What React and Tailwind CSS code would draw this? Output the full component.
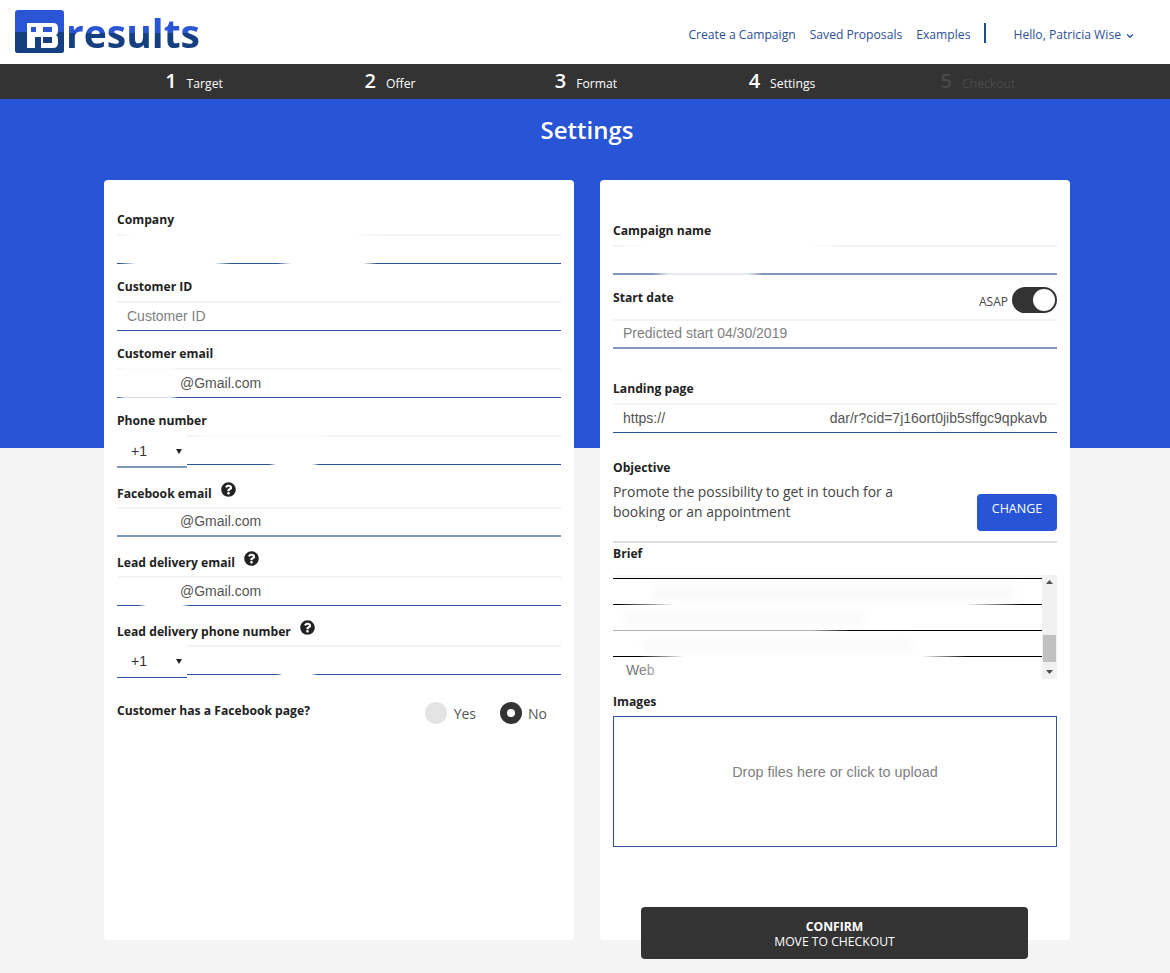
import { ChevronDown } from "lucide-react";
import { FaQuestionCircle } from "react-icons/fa";

const sans = "font-['Open_Sans',sans-serif]";
const arial = "font-['Liberation_Sans',Arial,sans-serif]";

const steps = [
  { n: 1, label: "Target" },
  { n: 2, label: "Offer" },
  { n: 3, label: "Format" },
  { n: 4, label: "Settings" },
  { n: 5, label: "Checkout", off: true },
];

function Logo() {
  return (
    <div className="flex ml-[15px] mt-[6px]">
      <svg width="49" height="44" viewBox="0 0 49 44" className="mt-[4px]">
        <rect width="49" height="43" rx="3" fill="#2a56d6" />
        <path d="M0 22h49v18a3 3 0 0 1-3 3H3a3 3 0 0 1-3-3z" fill="#163f80" />
        <path
          fill="#fff"
          fillRule="evenodd"
          d="M12 13H38Q43 13 43 18V21Q43 24 41 25Q43 26 43 29V33Q43 38 38 38H26V27H20V38H12ZM16 17V22H21V17ZM28 17V22H37V17ZM28 27V33H37V27Z"
        />
      </svg>
      <span
        className={`${sans} block h-[53px] ml-[2px] font-bold text-[39px] leading-[53px] bg-[linear-gradient(180deg,#2a56d6_27px,#163f80_27px)] bg-clip-text text-transparent`}
      >
        results
      </span>
    </div>
  );
}

function Header() {
  return (
    <header className="h-16 bg-white flex justify-between">
      <Logo />
      <nav className={`${sans} flex items-center text-[12.15px] text-[#2d4f94] h-[70px] pr-[35px]`}>
        <a className="mr-[14px]">Create a Campaign</a>
        <a className="mr-[14px]">Saved Proposals</a>
        <a>Examples</a>
        <span className="w-[2px] h-[20px] bg-[#1f4e8c] ml-[14px] mr-[27px] -mt-[4px]" />
        <a>Hello, Patricia Wise</a>
        <ChevronDown size={10} strokeWidth={3} className="ml-[4px] mt-[1px]" />
      </nav>
    </header>
  );
}

function Steps() {
  return (
    <div className="h-[35px] bg-[#333333]">
      <div className={`${sans} ml-[96px] w-[980px] grid grid-cols-5`}>
        {steps.map((s) => (
          <div
            key={s.n}
            className={`flex justify-center items-baseline h-[35px] ${s.off ? "text-[#4a4a4a]" : "text-white"}`}
          >
            <span className="text-[20px] font-semibold leading-[33px]">{s.n}</span>
            <span className="text-[12.2px] ml-[10px]">{s.label}</span>
          </div>
        ))}
      </div>
    </div>
  );
}

function Smear({ className }) {
  return (
    <div
      className={`absolute bg-[linear-gradient(90deg,transparent,#fff_14%,#fff_86%,transparent)] ${className}`}
    />
  );
}

function Help() {
  return <FaQuestionCircle size={15} className="text-[#222] ml-[9px] -mt-[10px]" />;
}

function Label({ children, right, className = "h-[18px] mb-[6px]" }) {
  return (
    <div className={`flex items-center justify-between ${className}`}>
      <div className={`${sans} flex items-center mt-[2px] text-[12.15px] font-bold text-[#222] leading-[18px]`}>
        {children}
      </div>
      {right}
    </div>
  );
}

function Input({ children, className = "", smears, soft }) {
  return (
    <div
      className={`${arial} relative flex-1 h-[30px] flex items-center border-t-2 border-t-[#f3f3f3] border-b text-[14px] text-[#555] pl-[10px] pb-[1px] ${
        soft ? "border-b-2 border-b-[#7f97bd]" : "border-b-[#2f5597]"
      } ${className}`}
    >
      {children}
      {smears}
    </div>
  );
}

function PhoneInput({ smears, soft }) {
  return (
    <div className="flex items-start mb-[15px]">
      <div
        className={`${arial} w-[70px] h-[33px] flex items-center justify-between pl-[14px] pr-[5px] text-[14px] text-[#333] ${
          soft ? "border-b-2 border-b-[#7f97bd] pt-[1px]" : "border-b border-b-[#2f5597]"
        }`}
      >
        +1
        <svg width="6" height="5" viewBox="0 0 6 5">
          <path d="M0 0h6L3 5z" fill="#222" />
        </svg>
      </div>
      <Input smears={smears} />
    </div>
  );
}

function Radio({ label, checked }) {
  return (
    <label className="flex items-center">
      <span
        className={`w-[22px] h-[22px] rounded-full flex items-center justify-center ${
          checked ? "bg-[#333]" : "bg-[#e4e4e4]"
        }`}
      >
        {checked && <span className="w-[8px] h-[8px] rounded-full bg-white" />}
      </span>
      <span className={`${sans} text-[14px] text-[#555] ${checked ? "ml-[6px]" : "ml-[7px]"}`}>{label}</span>
    </label>
  );
}

function LeftCard() {
  return (
    <div className="bg-white rounded-[4px] h-[760px] pt-[30px] px-[13px]">
      <Label>Company</Label>
      <Input
        className="mb-[13px]"
        smears={
          <>
            <Smear className="left-[3px] w-[110px] -top-[2px] bottom-[-2px]" />
            <Smear className="left-[160px] w-[100px] top-[2px] bottom-[-2px]" />
            <Smear className="left-0 w-[270px] -top-[2px] h-[4px] bg-[linear-gradient(90deg,#fff,#fff_30%,transparent_100%)]" />
          </>
        }
      />
      <Label>Customer ID</Label>
      <Input className="mb-[13px]">
        <span className="text-[#808080]">Customer ID</span>
      </Input>
      <Label>Customer email</Label>
      <Input
        className="mb-[13px] pl-[63px]"
        smears={<Smear className="left-0 w-[62px] -top-[2px] bottom-[-2px] opacity-80" />}
      >
        @Gmail.com
      </Input>
      <Label>Phone number</Label>
      <PhoneInput
        soft
        smears={
          <>
            <Smear className="left-[82px] w-[50px] top-[10px] bottom-[-2px]" />
            <Smear className="left-0 w-[150px] -top-[2px] h-[4px] opacity-80" />
          </>
        }
      />
      <Label className="h-[20px] mb-[4px]">
        Facebook email <Help />
      </Label>
      <Input className="mb-[15px] pl-[63px]" soft>
        @Gmail.com
      </Input>
      <Label className="h-[20px] mb-[4px]">
        Lead delivery email <Help />
      </Label>
      <Input className="mb-[15px] pl-[63px]">
        @Gmail.com
        <Smear className="left-[22px] w-[50px] top-[20px] bottom-[-2px]" />
      </Input>
      <Label className="h-[20px] mb-[4px]">
        Lead delivery phone number <Help />
      </Label>
      <PhoneInput smears={<Smear className="left-[90px] w-[40px] top-[20px] bottom-[-2px]" />} />
      <div className="flex justify-between items-start mt-[24px] pr-[14px]">
        <div className={`${sans} text-[12.15px] font-bold text-[#222] leading-[18px]`}>
          Customer has a Facebook page?
        </div>
        <div className="flex gap-[24px]">
          <Radio label="Yes" />
          <Radio label="No" checked />
        </div>
      </div>
    </div>
  );
}

function BriefBox() {
  return (
    <div className="flex h-[104px] bg-[#f7f7f7] mb-[13px]">
      <div className="flex-1 pt-[3px] overflow-hidden">
        <div className="relative h-[26px] bg-white border-t border-black">
          <div className="absolute left-[40px] w-[360px] top-[8px] h-[12px] bg-[#f8f8f8] blur-[4px]" />
        </div>
        <div className="relative h-[26px] bg-white border-t border-black">
          <Smear className="left-[5px] w-[405px] -top-[2px] h-[4px]" />
          <div className="absolute left-[10px] w-[240px] top-[8px] h-[12px] bg-[#f9f9f9] blur-[4px]" />
        </div>
        <div className="relative h-[26px] bg-white border-t border-black">
          <Smear className="-left-[60px] w-[300px] -top-[1px] h-[3px] opacity-70" />
          <div className="absolute left-[30px] w-[270px] top-[8px] h-[12px] bg-[#f9f9f9] blur-[4px]" />
        </div>
        <div className={`${arial} relative h-[26px] bg-white border-t border-black pl-[13px] text-[14px] leading-[26px] text-[#777]`}>
          Web
          <Smear className="left-[25px] w-[330px] -top-[2px] h-[26px]" />
        </div>
      </div>
      <div className="w-[15px] bg-[#f1f1f1] flex flex-col items-center justify-between py-[5px] relative">
        <svg width="7" height="4" viewBox="0 0 7 4">
          <path d="M0 4h7L3.500 0z" fill="#505050" />
        </svg>
        <div className="absolute left-[1px] w-[13px] top-[60px] h-[27px] bg-[#c1c1c1]" />
        <svg width="7" height="4" viewBox="0 0 7 4">
          <path d="M0 0h7L3.500 4z" fill="#505050" />
        </svg>
      </div>
    </div>
  );
}

function RightCard() {
  return (
    <div className="relative bg-white rounded-[4px] h-[760px] pt-[41px] px-[13px]">
      <Label>Campaign name</Label>
      <Input
        className="mb-[13px]"
        soft
        smears={
          <>
            <Smear className="left-0 w-[230px] -top-[2px] h-[5px]" />
            <Smear className="left-[40px] w-[110px] top-[20px] h-[10px] opacity-80" />
          </>
        }
      />
      <Label
        className="h-[25px] mb-[6px]"
        right={
          <div className="flex items-center -mt-[2px]">
            <span className={`${sans} text-[12px] text-[#444] mt-[4px] mr-[4px]`}>ASAP</span>
            <div className="w-[45px] h-[26px] rounded-full bg-[#333] flex items-center justify-end pr-[2px]">
              <span className="w-[22px] h-[22px] rounded-full bg-white" />
            </div>
          </div>
        }
      >
        <span className="-mt-[7px]">Start date</span>
      </Label>
      <Input className="mb-[30px]" soft>
        <span className="text-[#808080]">Predicted start 04/30/2019</span>
      </Input>
      <Label>Landing page</Label>
      <Input className="mb-[26px] justify-between pr-[10px] text-[#444]">
        <span>https://</span>
        <span>dar/r?cid=7j16ort0jib5sffgc9qpkavb</span>
      </Input>
      <div className={`${sans} text-[12.15px] font-bold text-[#222] leading-[18px]`}>Objective</div>
      <div className="flex justify-between items-start h-[66px] border-b-2 border-b-[#dddddd]">
        <p className={`${sans} w-[300px] text-[13.9px] leading-[20px] text-[#444] mt-[5px]`}>
          Promote the possibility to get in touch for a booking or an appointment
        </p>
        <button className={`${sans} w-[80px] h-[37px] mt-[17px] rounded-[4px] bg-[#2855d6] text-white text-[12.5px] pb-[7px]`}>
          CHANGE
        </button>
      </div>
      <div className={`${sans} text-[12.15px] font-bold text-[#222] leading-[18px] mt-[2px] mb-[12px]`}>Brief</div>
      <BriefBox />
      <Label>Images</Label>
      <div className={`${arial} h-[131px] border border-[#2f5597] flex items-center justify-center text-[14.4px] text-[#808080] pb-[18px]`}>
        Drop files here or click to upload
      </div>
      <button
        className={`${sans} absolute left-[41px] -bottom-[19px] w-[387px] h-[52px] rounded-[4px] bg-[#333] text-white text-[12.2px] leading-[15px] pt-[1px]`}
      >
        <b className="block">CONFIRM</b>
        MOVE TO CHECKOUT
      </button>
    </div>
  );
}

export default function App() {
  return (
    <div className="min-h-[973px] bg-[#f4f4f4] pb-[33px]">
      <Header />
      <Steps />
      <div className="h-[349px] bg-[#2855d6] pt-[14px]">
        <h1 className={`${sans} ml-[104px] w-[966px] text-center text-[24px] font-semibold leading-[34px] text-white`}>
          Settings
        </h1>
      </div>
      <div className="ml-[104px] w-[966px] grid grid-cols-2 gap-[26px] -mt-[268px]">
        <LeftCard />
        <RightCard />
      </div>
    </div>
  );
}
